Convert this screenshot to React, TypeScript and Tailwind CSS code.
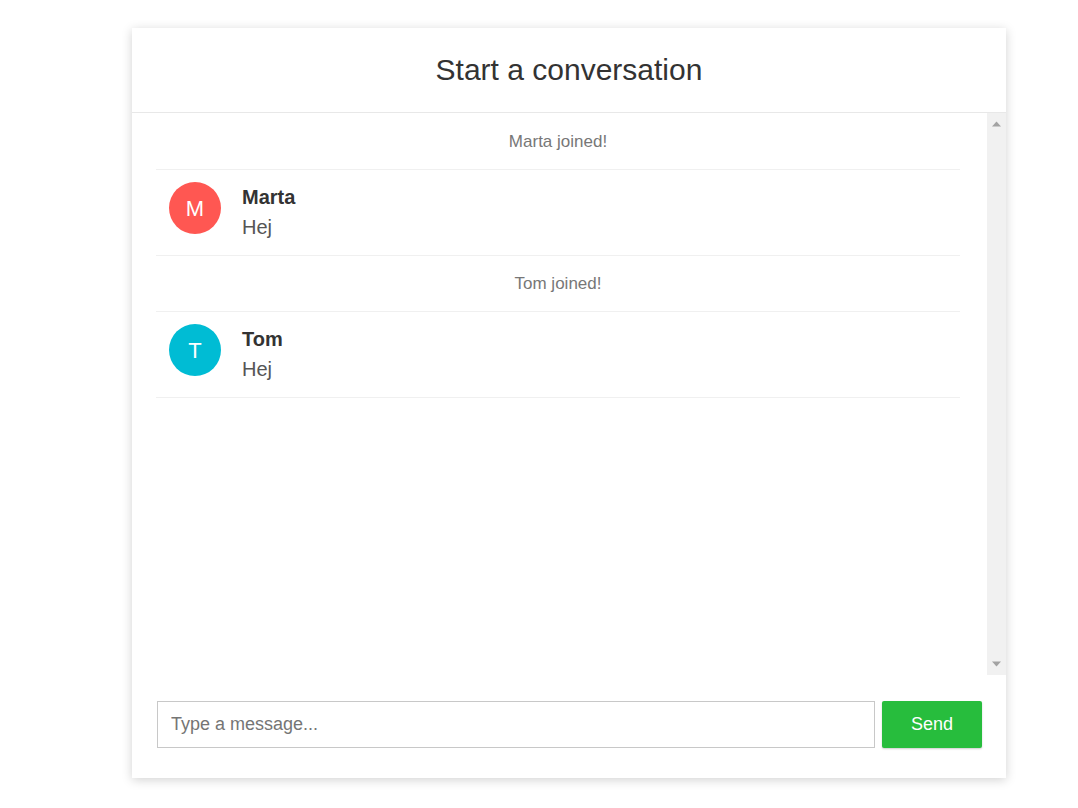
import { useState } from 'react';

type Item =
    | { kind: 'event'; text: string }
    | { kind: 'message'; name: string; text: string; color: string };

const items: Item[] = [
    { kind: 'event', text: 'Marta joined!' },
    { kind: 'message', name: 'Marta', text: 'Hej', color: 'bg-[#ff5752]' },
    { kind: 'event', text: 'Tom joined!' },
    { kind: 'message', name: 'Tom', text: 'Hej', color: 'bg-[#00bcd4]' },
];

function FakeScrollbar() {
    return (
        <div className="w-[19px] shrink-0 bg-[#f1f1f1] flex flex-col justify-between items-center py-[8px]">
            <svg width="9" height="6" viewBox="0 0 9 6"><path d="M0 5.5 L4.5 0.5 L9 5.5 Z" fill="#a3a3a3" /></svg>
            <svg width="9" height="6" viewBox="0 0 9 6"><path d="M0 0.5 L4.5 5.5 L9 0.5 Z" fill="#a3a3a3" /></svg>
        </div>
    );
}

export default function App() {
    const [message, setMessage] = useState('');

    return (
        <div className="min-h-screen bg-white pt-[28px] pl-[132px] font-['Liberation_Sans',Arial,sans-serif]">
            <div className="w-[874px] h-[750px] bg-white shadow-[0_2px_10px_rgba(0,0,0,0.18)] flex flex-col">
                <div className="h-[85px] shrink-0 border-b border-[#e8e8e8] flex items-center justify-center">
                    <h1 className="text-[30px] text-[#333] leading-none">Start a conversation</h1>
                </div>

                <div className="flex-1 flex min-h-0">
                    <div className="flex-1 pt-[1px] pl-[24px] pr-[27px] overflow-hidden">
                        {items.map((item, i) =>
                            item.kind === 'event' ? (
                                <div key={i} className="h-[56px] border-b border-[#f0f0f0] flex items-center justify-center text-[17px] text-[#777]">
                                    {item.text}
                                </div>
                            ) : (
                                <div key={i} className="flex items-start pl-[13px] pt-[12px] pb-[13px] border-b border-[#f0f0f0]">
                                    <div className={`w-[52px] h-[52px] rounded-full ${item.color} flex items-center justify-center text-white text-[22px] shrink-0`}>
                                        {item.name[0]}
                                    </div>
                                    <div className="ml-[21px] leading-[30px] text-[20px]">
                                        <div className="font-bold text-[#333]">{item.name}</div>
                                        <div className="text-[#555]">{item.text}</div>
                                    </div>
                                </div>
                            )
                        )}
                    </div>
                    <FakeScrollbar />
                </div>

                <div className="shrink-0 h-[103px] flex items-start gap-[7px] pt-[26px] pl-[25px] pr-[24px]">
                    <input
                        value={message}
                        onChange={(e) => setMessage(e.target.value)}
                        placeholder="Type a message..."
                        className="flex-1 h-[47px] border border-[#c8c8c8] px-[13px] text-[18px] text-[#333] placeholder:text-[#757575] outline-none"
                    />
                    <button className="w-[100px] h-[47px] bg-[#27bd3d] text-white text-[18px] rounded-[2px] shadow-[0_1px_2px_rgba(0,0,0,0.2)]">
                        Send
                    </button>
                </div>
            </div>
        </div>
    );
}
